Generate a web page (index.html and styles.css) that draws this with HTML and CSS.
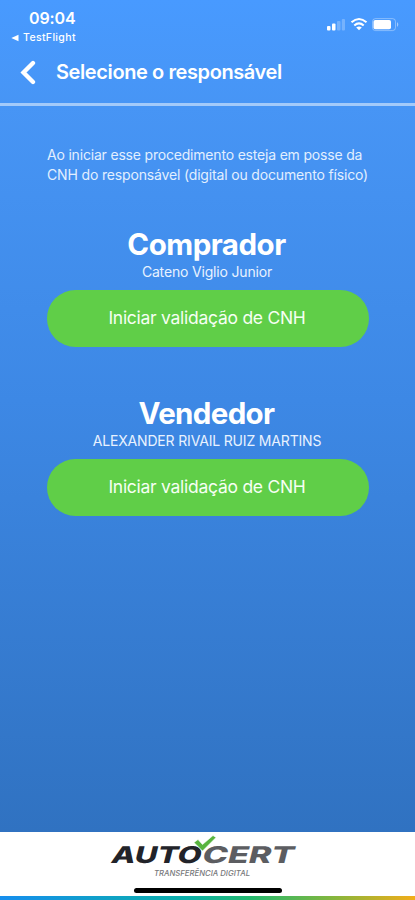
FILE: index.html
```html
<!DOCTYPE html>
<html lang="pt-BR">
<head>
<meta charset="utf-8">
<title>Selecione o responsável</title>
<link rel="stylesheet" href="styles.css">
</head>
<body>
<div class="screen">
  <div class="status">
    <div class="status-left">
      <div class="time">09:04</div>
      <div class="return"><svg width="8" height="8" viewBox="0 0 8 8"><path d="M7.5 .7v6.6L.3 4z" fill="#fff"/></svg><span>TestFlight</span></div>
    </div>
    <svg class="status-icons" width="74" height="16" viewBox="0 0 74 16" fill="#fff">
      <rect x="1" y="10" width="3.500" height="4.500" rx="1"/>
      <rect x="6" y="7.500" width="3.500" height="7" rx="1"/>
      <rect x="11" y="5" width="3.500" height="9.500" rx="1" opacity=".25"/>
      <rect x="15.800" y="3" width="3.200" height="11.500" rx="1" opacity=".25"/>
      <g fill="none" stroke="#fff" stroke-width="2.100"><path d="M25.500 6.300Q33 -.3 40.500 6.300"/><path d="M28.300 9.500Q33 5.400 37.700 9.500"/></g>
      <path d="M30.200 11.500Q33 9.400 35.800 11.500L33 14.300z"/>
      <rect x="46.500" y="2.600" width="23" height="12" rx="3" fill="none" stroke="#fff" opacity=".35"/>
      <rect x="47.500" y="4" width="17.500" height="9.200" rx="1.800"/>
      <path d="M71 6q2.600 2.500 0 5z" opacity=".5"/>
    </svg>
  </div>
  <header class="nav">
    <svg width="16" height="26" viewBox="0 0 16 26"><path d="M13 3L3.500 12.500L13 22" fill="none" stroke="#fff" stroke-width="4.300" stroke-linecap="round" stroke-linejoin="miter"/></svg>
    <h1>Selecione o responsável</h1>
  </header>
  <main>
    <p class="intro"><span class="line-one">Ao iniciar esse procedimento esteja em posse da</span><br><span class="line-two">CNH do responsável (digital ou documento físico)</span></p>
    <section>
      <h2 class="buyer">Comprador</h2>
      <p class="person">Cateno Viglio Junior</p>
      <button>Iniciar validação de CNH</button>
    </section>
    <section>
      <h2 class="seller">Vendedor</h2>
      <p class="person">ALEXANDER RIVAIL RUIZ MARTINS</p>
      <button>Iniciar validação de CNH</button>
    </section>
  </main>
  <footer>
    <svg class="logo" width="200" height="48" viewBox="0 0 200 48">
      <g transform="translate(3 31) skewX(-14)">
        <text class="brand dark" x="1" y="0" textLength="90" lengthAdjust="spacingAndGlyphs">AUTO</text>
        <text class="brand grey" x="92" y="0" textLength="92" lengthAdjust="spacingAndGlyphs">CERT</text>
      </g>
      <path d="M88 10.500L92 7.500L96.500 12.500L107 3.500L110 5.500L96.500 19z" fill="#58b43e" stroke="#fff" stroke-width=".6"/>
      <text class="tagline" x="48" y="44" textLength="96" lengthAdjust="spacingAndGlyphs">TRANSFERÊNCIA DIGITAL</text>
    </svg>
    <div class="home"></div>
    <div class="stripe"></div>
  </footer>
</div>
</body>
</html>
```
FILE: styles.css
```css
* { box-sizing: border-box; }
body { margin: 0; font-family: Inter, "Liberation Sans", sans-serif; color: #fff; }
h1, h2, p { margin: 0; }
svg { display: block; }
.screen { width: 415px; height: 900px; display: flex; flex-direction: column; overflow: hidden; background: linear-gradient(#489aff 0, #4795f5 105px, #3d88e5 400px, #3072c1 832px); }
.status { height: 48px; display: flex; justify-content: space-between; padding: 8px 15px 0 11px; }
.time { padding-left: 18px; font-size: 16px; line-height: 20px; font-weight: 600; letter-spacing: -.1px; }
.return { display: flex; align-items: center; gap: 4px; margin-top: 3px; font-size: 10.5px; line-height: 14px; font-weight: 500; letter-spacing: .35px; }
.status-icons { margin-top: 8px; }
.nav { height: 58px; display: flex; align-items: flex-start; padding: 12px 0 0 20px; gap: 20px; border-bottom: 3px solid #a3cafa; }
.nav h1 { font-size: 20px; line-height: 25px; font-weight: 600; letter-spacing: -.4px; }
main { flex: 1; padding: 39px 46px 0 47px; }
.intro { font-size: 14px; line-height: 20px; color: #e2efff; white-space: nowrap; height: 81px; }
.line-one { letter-spacing: -.19px; }
.line-two { letter-spacing: -.16px; }
section { height: 169px; text-align: center; }
h2 { padding-right: 3px; font-size: 29.5px; line-height: 36px; font-weight: 700; letter-spacing: -.5px; }
.seller { letter-spacing: -.65px; }
.person { padding-right: 2px; font-size: 14px; line-height: 20px; color: #e8f2ff; white-space: nowrap; letter-spacing: -.17px; }
button { display: block; width: 322px; height: 57px; margin: 8px 0 0; border: 0; border-radius: 29px; background: #60ce48; color: #f6fff3; font: 400 17.5px/55px Inter, sans-serif; padding: 0 2px 2px 0; letter-spacing: -.27px; }
footer { height: 68px; background: #fff; display: flex; flex-direction: column; align-items: center; }
.logo { flex: none; margin-right: 3px; }
.brand { font: 800 23px Inter, sans-serif; }
.dark { fill: #222329; }
.grey { fill: #5c5d61; }
.tagline { font: italic 500 7px Inter, sans-serif; fill: #77787b; }
.home { width: 148px; height: 5px; margin-top: 8px; border-radius: 3px; background: #000; }
.stripe { width: 100%; height: 4px; margin-top: auto; background: linear-gradient(90deg, #168eee, #0aafa9 45%, #22b96f 60%, #83b63e 80%, #f3ad19); }
```
